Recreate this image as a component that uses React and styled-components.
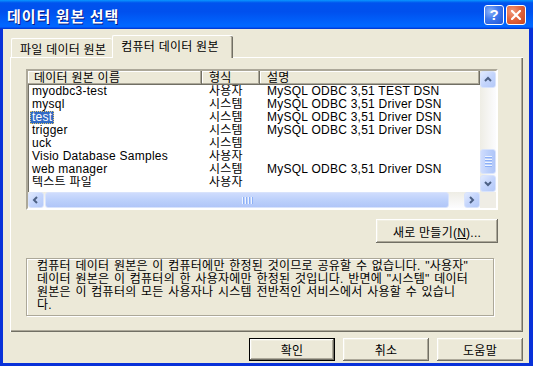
import React from "react"
import styled, { createGlobalStyle } from "styled-components"

const GlobalStyle = createGlobalStyle`
  html, body {
    margin: 0;
    padding: 0;
    background: #ECE9D8;
  }
  body {
    font-family: "Liberation Sans", "Noto Sans CJK KR", sans-serif;
    font-size: 12px;
    letter-spacing: 0.25px;
    color: #000;
  }
`

const bevel = `
  box-shadow: inset -1px -1px #716F64, inset 1px 1px #fff,
    inset -2px -2px #ACA899, inset 2px 2px #F1EFE2;
`

const Window = styled.div`
  width: 533px;
  height: 366px;
  display: flex;
  flex-direction: column;
  background: #0831D9;
  overflow: hidden;
`

const TitleBar = styled.div`
  height: 29px;
  flex: none;
  display: flex;
  align-items: center;
  padding: 0 7px 0 7px;
  box-sizing: border-box;
  background: linear-gradient(180deg, #0997FF 0%, #0053EE 10%, #0050EE 40%,
    #0066FF 86%, #0066FF 92%, #005BFF 94%, #003DD7 97%, #003DD7 100%);
`

const Title = styled.span`
  font-family: "Noto Sans CJK KR", sans-serif;
  font-weight: 700;
  font-size: 15px;
  letter-spacing: 1px;
  color: #fff;
  text-shadow: 1px 1px #0A1883;
  margin-top: 1px;
`

const Spacer = styled.span`
  margin-left: auto;
`

const CaptionButton = styled.button`
  width: 20px;
  height: 20px;
  margin-left: 2px;
  padding: 0;
  border: 1px solid #fff;
  border-radius: 3px;
  display: flex;
  align-items: center;
  justify-content: center;
  color: #fff;
  font-family: "Liberation Sans", sans-serif;
  font-weight: 700;
  font-size: 15px;
  background: ${p => p.$close
    ? "radial-gradient(circle at 30% 30%, #F19A7C 0%, #E2663F 45%, #C9431D 100%)"
    : "radial-gradient(circle at 30% 30%, #8DB4F8 0%, #3F78EC 45%, #1F55D6 100%)"};
`

const Client = styled.div`
  flex: 1;
  margin: 0 4px 3px 3px;
  background: #ECE9D8;
  display: flex;
  flex-direction: column;
  padding: 6px 6px 0 7px;
`

const TabStrip = styled.div`
  display: flex;
  align-items: flex-end;
  height: 22px;
  padding-left: 1px;
  position: relative;
  z-index: 1;
`

const Tab = styled.div`
  height: ${p => (p.$active ? 23 : 19)}px;
  box-sizing: border-box;
  padding: 0 ${p => (p.$active ? 14 : 6)}px ${p => (p.$active ? 3 : 0)}px 8px;
  display: flex;
  align-items: center;
  white-space: nowrap;
  background: #ECE9D8;
  border-top: 1px solid #fff;
  border-left: 1px solid #fff;
  border-radius: 2px 2px 0 0;
  margin-bottom: ${p => (p.$active ? -1 : 0)}px;
  box-shadow: ${p => (p.$active ? "inset -1px 0 #716F64, inset -2px 0 #ACA899" : "none")};
`

const Panel = styled.div`
  flex: none;
  height: 275px;
  box-sizing: border-box;
  border-top: 1px solid #fff;
  border-left: 1px solid #fff;
  box-shadow: inset -1px -1px #716F64, inset -2px -2px #ACA899;
  padding: 11px 0 0 15px;
  display: flex;
  flex-direction: column;
`

const Content = styled.div`
  width: 472px;
  display: flex;
  flex-direction: column;
`

const ListView = styled.div`
  height: 141px;
  box-sizing: border-box;
  border: 2px solid;
  border-color: #ACA899 #fff #fff #ACA899;
  box-shadow: inset 1px 1px #716F64;
  background: #fff;
  display: grid;
  grid-template-columns: 1fr 16px;
  grid-template-rows: 1fr 16px;
`

const ListBody = styled.div`
  overflow: hidden;
  display: flex;
  flex-direction: column;
`

const Cols = styled.div`
  display: grid;
  grid-template-columns: 174px 58px 1fr;
  white-space: nowrap;
`

const HeaderCell = styled.div`
  height: 14px;
  line-height: 14px;
  padding-left: ${p => p.$pad}px;
  background: #ECE9D8;
  box-shadow: inset -1px -1px #716F64, inset -2px -2px #ACA899, inset 1px 1px #fff;
`

const Cell = styled.div`
  height: 13px;
  line-height: 13px;
  padding-left: ${p => p.$pad}px;
  overflow: hidden;
`

const Selected = styled.span`
  display: inline-block;
  margin-left: -2px;
  padding: 0 2px;
  height: 13px;
  box-sizing: border-box;
  background: #316AC5;
  color: #fff;
  outline: 1px dotted #E8C96A;
  outline-offset: -1px;
`

const VScroll = styled.div`
  display: flex;
  flex-direction: column;
  background: linear-gradient(90deg, #EEEDE5, #FCFCFE);
`

const HScroll = styled.div`
  display: flex;
  background: linear-gradient(180deg, #EEEDE5, #FCFCFE);
`

const Corner = styled.div`
  background: #EFEDE5;
`

const ScrollBtn = styled.div`
  flex: none;
  width: 16px;
  height: ${p => (p.$tall ? 17 : 16)}px;
  box-sizing: border-box;
  border: 1px solid #D8E3FC;
  border-radius: 3px;
  background: linear-gradient(135deg, #E1EAFE 0%, #C4D5FC 50%, #B4C9F8 100%);
  display: flex;
  align-items: center;
  justify-content: center;
`

const Track = styled.div`
  flex: 1;
  display: flex;
  flex-direction: ${p => (p.$vertical ? "column" : "row")};
`

const Thumb = styled.div`
  flex: none;
  box-sizing: border-box;
  border: 1px solid #D8E3FC;
  border-radius: 3px;
  background: linear-gradient(${p => (p.$vertical ? "90deg" : "180deg")}, #CFDCFD 0%, #BCD0FB 50%, #B0C6F8 100%);
  display: flex;
  align-items: center;
  justify-content: center;
`

const Grip = styled.div`
  display: flex;
  flex-direction: ${p => (p.$vertical ? "column" : "row")};
  gap: 1px;
`

const GripLine = styled.span`
  background: #EEF4FE;
  border-${p => (p.$vertical ? "bottom" : "right")}: 1px solid #8CB0F8;
  width: ${p => (p.$vertical ? "7px" : "1px")};
  height: ${p => (p.$vertical ? "1px" : "7px")};
`

const NewRow = styled.div`
  display: flex;
  justify-content: flex-end;
  margin-top: 9px;
`

const Button = styled.button`
  height: ${p => p.$h || 23}px;
  width: ${p => p.$w}px;
  padding: 0;
  font: inherit;
  font-size: 12px;
  letter-spacing: 0.25px;
  color: #000;
  background: #ECE9D8;
  border: ${p => (p.$default ? "1px solid #000" : "none")};
  ${bevel}
`

const Description = styled.div`
  margin-top: 15px;
  width: 468px;
  height: 58px;
  box-sizing: border-box;
  border: 1px solid #ACA899;
  box-shadow: 1px 1px 0 #fff, inset 1px 1px 0 #fff;
  padding: 1px 8px 0 10px;
  line-height: 13px;
  word-spacing: 1px;
  white-space: nowrap;
`

const ButtonRow = styled.div`
  display: flex;
  justify-content: flex-end;
  gap: 8px;
  margin-top: 6px;
`

function Chevron({ dir }) {
  const pts = {
    up: "1,5 4,2 7,5",
    down: "1,2 4,5 7,2",
    left: "5,1 2,4 5,7",
    right: "2,1 5,4 2,7",
  }[dir]
  return (
    <svg width="8" height="8" viewBox="0 0 8 8">
      <polyline points={pts} fill="none" stroke="#4D6185" strokeWidth="2" />
    </svg>
  )
}

function ScrollGrip({ vertical }) {
  return (
    <Grip $vertical={vertical}>
      {[0, 1, 2, 3].map(i => <GripLine key={i} $vertical={vertical} />)}
    </Grip>
  )
}

const rows = [
  ["myodbc3-test", "사용자", "MySQL ODBC 3,51 TEST DSN"],
  ["mysql", "시스템", "MySQL ODBC 3,51 Driver DSN"],
  ["test", "시스템", "MySQL ODBC 3,51 Driver DSN"],
  ["trigger", "시스템", "MySQL ODBC 3,51 Driver DSN"],
  ["uck", "시스템", ""],
  ["Visio Database Samples", "사용자", ""],
  ["web manager", "시스템", "MySQL ODBC 3,51 Driver DSN"],
  ["텍스트 파일", "사용자", ""],
]

export default function App() {
  return (
    <Window>
      <GlobalStyle />
      <TitleBar>
        <Title>데이터 원본 선택</Title>
        <Spacer />
        <CaptionButton>?</CaptionButton>
        <CaptionButton $close>
          <svg width="10" height="10" viewBox="0 0 10 10">
            <path d="M1 1 L9 9 M9 1 L1 9" stroke="#fff" strokeWidth="2.2" strokeLinecap="square" />
          </svg>
        </CaptionButton>
      </TitleBar>
      <Client>
        <TabStrip>
          <Tab>파일 데이터 원본</Tab>
          <Tab $active>컴퓨터 데이터 원본</Tab>
        </TabStrip>
        <Panel>
          <Content>
            <ListView>
              <ListBody>
                <Cols>
                  <HeaderCell $pad={6}>데이터 원본 이름</HeaderCell>
                  <HeaderCell $pad={7}>형식</HeaderCell>
                  <HeaderCell $pad={7}>설명</HeaderCell>
                </Cols>
                {rows.map(([name, kind, desc]) => (
                  <Cols key={name}>
                    <Cell $pad={4}>{name === "test" ? <Selected>{name}</Selected> : name}</Cell>
                    <Cell $pad={7}>{kind}</Cell>
                    <Cell $pad={7}>{desc}</Cell>
                  </Cols>
                ))}
              </ListBody>
              <VScroll>
                <ScrollBtn $tall><Chevron dir="up" /></ScrollBtn>
                <Track $vertical>
                  <Thumb $vertical style={{ marginTop: 61, height: 25 }}>
                    <ScrollGrip vertical />
                  </Thumb>
                </Track>
                <ScrollBtn $tall><Chevron dir="down" /></ScrollBtn>
              </VScroll>
              <HScroll>
                <ScrollBtn><Chevron dir="left" /></ScrollBtn>
                <Track>
                  <Thumb style={{ marginLeft: 1, width: 404 }}>
                    <ScrollGrip />
                  </Thumb>
                </Track>
                <ScrollBtn><Chevron dir="right" /></ScrollBtn>
              </HScroll>
              <Corner />
            </ListView>
            <NewRow>
              <Button $w={122} $h={24}>새로 만들기(<u>N</u>)...</Button>
            </NewRow>
            <Description>
              컴퓨터 데이터 원본은 이 컴퓨터에만 한정된 것이므로 공유할 수 없습니다. "사용자"<br />
              데이터 원본은 이 컴퓨터의 한 사용자에만 한정된 것입니다. 반면에 "시스템" 데이터<br />
              원본은 이 컴퓨터의 모든 사용자나 시스템 전반적인 서비스에서 사용할 수 있습니<br />
              다.
            </Description>
          </Content>
        </Panel>
        <ButtonRow>
          <Button $w={86} $default>확인</Button>
          <Button $w={86}>취소</Button>
          <Button $w={86}>도움말</Button>
        </ButtonRow>
      </Client>
    </Window>
  )
}
